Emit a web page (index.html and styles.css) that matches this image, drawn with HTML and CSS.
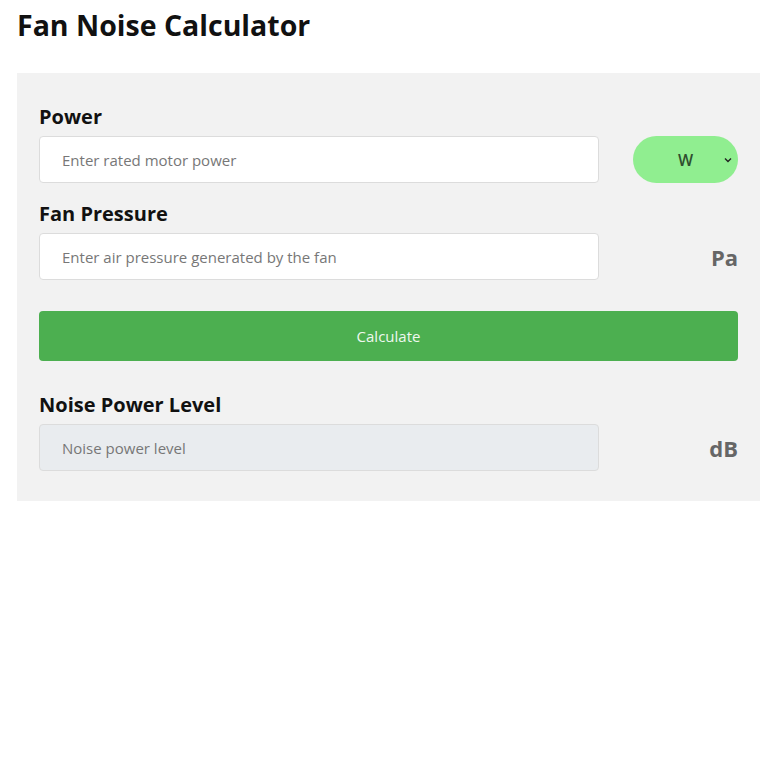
FILE: index.html
```html
<!DOCTYPE html>
<html lang="en">
<head>
  <meta charset="UTF-8">
  <title>Fan Noise Calculator</title>
  <meta name="viewport" content="width=device-width, initial-scale=1.0">
  <link rel="stylesheet" href="styles.css">
</head>
<body>
  <h1>Fan Noise Calculator</h1>
  <form class="calc" autocomplete="off">
    <label class="field-label" for="power">Power</label>
    <div class="row">
      <input type="number" id="power" placeholder="Enter rated motor power">
      <div class="unit">
        <select class="unit-select" id="powerUnit">
          <option value="w">W</option>
          <option value="kw">kW</option>
          <option value="hp">hp</option>
        </select>
      </div>
    </div>

    <label class="field-label" for="pressure">Fan Pressure</label>
    <div class="row">
      <input type="number" id="pressure" placeholder="Enter air pressure generated by the fan">
      <div class="unit"><span class="unit-text">Pa</span></div>
    </div>

    <button type="button" class="calc-btn">Calculate</button>

    <label class="field-label" for="noise">Noise Power Level</label>
    <div class="row">
      <input type="text" id="noise" placeholder="Noise power level" readonly>
      <div class="unit"><span class="unit-text">dB</span></div>
    </div>
  </form>
</body>
</html>
```
FILE: styles.css
```css
*,
*::before,
*::after {
  box-sizing: border-box;
}
body {
  margin: 0;
  font-family: 'Open Sans', 'Noto Sans', sans-serif;
  background: #fff;
  color: #111;
}
h1 {
  margin: 6px 0 29px 17px;
  font-size: 28.5px;
  font-weight: 700;
  line-height: normal;
}
.calc {
  margin-left: 17px;
  width: 743px;
  background: #f2f2f2;
  padding: 30px 22px 30px 22px;
}
.field-label {
  display: block;
  font-size: 20px;
  font-weight: 700;
  line-height: normal;
  margin-bottom: 6px;
}
.row {
  display: flex;
  align-items: center;
  justify-content: space-between;
  margin-bottom: 17px;
}
.row:last-child {
  margin-bottom: 0;
}
.row input {
  width: 560px;
  height: 47px;
  padding: 0 22px;
  border: 1px solid #dcdcdc;
  border-radius: 4px;
  background: #fff;
  font-family: inherit;
  font-size: 15px;
  color: #333;
  outline: none;
}
.row input::placeholder {
  color: #777;
}
.row input[readonly] {
  background: #e9ecef;
}
.unit {
  width: 105px;
  display: flex;
  justify-content: flex-end;
}
.unit-select {
  appearance: none;
  -webkit-appearance: none;
  width: 105px;
  height: 47px;
  border: none;
  border-radius: 24px;
  background: #90ee90 url("data:image/svg+xml,%3Csvg xmlns='http://www.w3.org/2000/svg' width='8' height='6' viewBox='0 0 8 6'%3E%3Cpath d='M1 1.5l3 3 3-3' fill='none' stroke='%23222' stroke-width='1.4'/%3E%3C/svg%3E") no-repeat right 6px center;
  font-family: inherit;
  font-size: 16px;
  font-weight: 600;
  color: #2f4f2f;
  text-align: center;
  text-align-last: center;
  padding: 0;
}
.unit-text {
  font-size: 22px;
  font-weight: 700;
  color: #666;
}
.calc-btn {
  display: block;
  width: 100%;
  height: 50px;
  margin: 31px 0 30px;
  border: none;
  border-radius: 4px;
  background: #4caf50;
  color: #eef8ee;
  font-family: inherit;
  font-size: 15px;
  cursor: pointer;
}
```
